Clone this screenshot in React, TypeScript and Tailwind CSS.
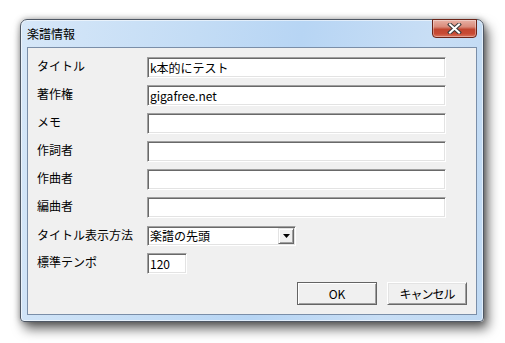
import React from "react";

const font = { fontFamily: '"Noto Sans CJK JP", "Noto Sans", sans-serif' };

function Sunken({ w, h, children }: { w: string; h: string; children?: React.ReactNode }) {
  return (
    <div
      className={`${w} ${h} bg-white border border-t-[#a0a0a0] border-l-[#a0a0a0] border-b-white border-r-white shadow-[inset_1px_1px_0_#696969,inset_-1px_-1px_0_#e3e3e3] flex items-center pl-[2px] text-[12px] leading-none text-black overflow-hidden whitespace-nowrap`}
    >
      {children}
    </div>
  );
}

function Row({ label, children, mt }: { label: string; children: React.ReactNode; mt: string }) {
  return (
    <div className={`flex ${mt}`}>
      <div className="w-[110px] pt-[2px] text-[12px] leading-[14px] text-black whitespace-nowrap">{label}</div>
      {children}
    </div>
  );
}

export default function App() {
  return (
    <div className="w-[505px] h-[343px] bg-white pt-[19px] pl-[20px]" style={font}>
      <div className="relative w-[464px] h-[303px] rounded-t-[7px] rounded-b-[4px] border border-[#4f5865] bg-[linear-gradient(100deg,#d6e7f8_0%,#c3dcf5_35%,#b7d5f4_55%,#c8def5_80%,#bfd9f3_100%)] shadow-[4px_7px_12px_rgba(0,0,0,0.6),0_0_6px_rgba(0,0,0,0.35),inset_0_0_0_1px_rgba(255,255,255,0.55)] flex flex-col">
        <div className="h-[27px] flex items-center pl-[6px] pt-[1px] text-[12px] text-black">楽譜情報</div>
        <div className="absolute top-[-1px] right-[6px] w-[45px] h-[19px] rounded-b-[4px] border border-[#6b2418] bg-[linear-gradient(180deg,#e8b1a5_0%,#d98b7b_40%,#c24630_55%,#c84a33_80%,#d9755e_100%)] shadow-[inset_0_0_0_1px_rgba(255,255,255,0.35)] flex items-center justify-center">
          <svg width="15" height="11" viewBox="0 0 15 11">
            <path d="M3 1.5 L12 9.5 M12 1.5 L3 9.5" stroke="#3c3c3c" strokeWidth="4" strokeLinecap="square" />
            <path d="M3 1.5 L12 9.5 M12 1.5 L3 9.5" stroke="#ffffff" strokeWidth="2" strokeLinecap="square" />
          </svg>
        </div>
        <div className="flex-1 mx-[6px] mb-[6px] border border-[#7a8ea8] bg-[#f0f0f0] pl-[9px] pt-[9px] flex flex-col">
          <Row label="タイトル" mt="mt-0">
            <Sunken w="w-[299px]" h="h-[21px]">k本的にテスト</Sunken>
          </Row>
          <Row label="著作権" mt="mt-[7px]">
            <Sunken w="w-[299px]" h="h-[21px]">gigafree.net</Sunken>
          </Row>
          <Row label="メモ" mt="mt-[7px]">
            <Sunken w="w-[299px]" h="h-[21px]" />
          </Row>
          <Row label="作詞者" mt="mt-[7px]">
            <Sunken w="w-[299px]" h="h-[21px]" />
          </Row>
          <Row label="作曲者" mt="mt-[7px]">
            <Sunken w="w-[299px]" h="h-[21px]" />
          </Row>
          <Row label="編曲者" mt="mt-[7px]">
            <Sunken w="w-[299px]" h="h-[21px]" />
          </Row>
          <Row label="タイトル表示方法" mt="mt-[8px]">
            <div className="w-[149px] h-[20px] bg-white border border-t-[#a0a0a0] border-l-[#a0a0a0] border-b-white border-r-white shadow-[inset_1px_1px_0_#696969,inset_-1px_-1px_0_#e3e3e3] flex items-stretch p-[1px]">
              <div className="flex-1 flex items-center pl-[1px] text-[12px] leading-none text-black whitespace-nowrap">楽譜の先頭</div>
              <div className="w-[16px] bg-[#f0f0f0] border border-t-[#e3e3e3] border-l-[#e3e3e3] border-b-[#696969] border-r-[#696969] shadow-[inset_1px_1px_0_#ffffff,inset_-1px_-1px_0_#a0a0a0] flex items-center justify-center">
                <svg width="7" height="4" viewBox="0 0 7 4">
                  <path d="M0 0 H7 L3.5 4 Z" fill="#000" />
                </svg>
              </div>
            </div>
          </Row>
          <Row label="標準テンポ" mt="mt-[7px]">
            <Sunken w="w-[40px]" h="h-[21px]">120</Sunken>
          </Row>
          <div className="flex justify-end gap-[10px] pr-[9px] mt-[8px]">
            <div className="w-[80px] h-[23px] border border-[#646464] bg-[#f0f0f0] shadow-[inset_1px_1px_0_#ffffff,inset_-1px_-1px_0_#a0a0a0] flex items-center justify-center text-[12px] text-black">OK</div>
            <div className="w-[80px] h-[23px] border border-t-[#ffffff] border-l-[#ffffff] border-b-[#696969] border-r-[#696969] bg-[#f0f0f0] shadow-[inset_1px_1px_0_#e3e3e3,inset_-1px_-1px_0_#a0a0a0] flex items-center justify-center text-[12px] text-black tracking-[-1px]">キャンセル</div>
          </div>
        </div>
      </div>
    </div>
  );
}
